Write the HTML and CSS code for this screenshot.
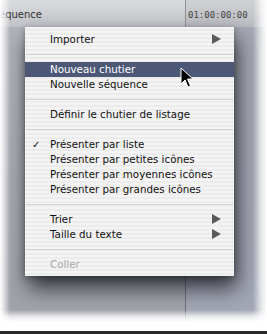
FILE: index.html
```html
<!DOCTYPE html>
<html lang="fr">
<head>
<meta charset="utf-8">
<link rel="stylesheet" href="styles.css">
</head>
<body>
<div class="frame">
  <div class="window">
    <div class="header">
      <div class="cell-name"><span class="clip">équence</span></div>
      <div class="cell-time">01:00:00:00</div>
    </div>
    <div class="body">
      <div class="col-left"></div>
      <div class="col-right"></div>
    </div>

    <div class="menu">
      <div class="item sub"><span>Importer</span><i class="arrow"></i></div>
      <div class="sep"></div>
      <div class="item hl"><span>Nouveau chutier</span></div>
      <div class="item"><span>Nouvelle séquence</span></div>
      <div class="sep"></div>
      <div class="item"><span>Définir le chutier de listage</span></div>
      <div class="sep"></div>
      <div class="item checked"><b class="check">✓</b><span>Présenter par liste</span></div>
      <div class="item"><span>Présenter par petites icônes</span></div>
      <div class="item"><span>Présenter par moyennes icônes</span></div>
      <div class="item"><span>Présenter par grandes icônes</span></div>
      <div class="sep"></div>
      <div class="item sub"><span>Trier</span><i class="arrow"></i></div>
      <div class="item sub"><span>Taille du texte</span><i class="arrow"></i></div>
      <div class="sep"></div>
      <div class="item disabled"><span>Coller</span></div>
    </div>

    <svg class="cursor" width="14" height="22" viewBox="0 0 14 22">
      <path d="M1 1 L1 17 L5 13 L8 20 L10.5 19 L7.5 12 L13 12 Z" fill="#000" stroke="#fff" stroke-width="1" stroke-linejoin="round"/>
    </svg>
  </div>
  <div class="bottom-line"></div>
</div>
</body>
</html>
```
FILE: styles.css
```css
html, body {
  margin: 0;
  padding: 0;
  background: #ffffff;
}
body {
  width: 267px;
  height: 334px;
  overflow: hidden;
  font-family: "DejaVu Sans", "Liberation Sans", sans-serif;
}
.frame {
  display: flex;
  flex-direction: column;
  width: 267px;
  height: 334px;
}
.window {
  position: relative;
  flex: 0 0 322px;
  display: flex;
  flex-direction: column;
  background: #a3a6af;
  overflow: hidden;
}
.window::before {
  content: "";
  position: absolute;
  left: 0; top: 0; bottom: 0;
  width: 10px;
  background: linear-gradient(to right, #ffffff 0%, rgba(255,255,255,0.65) 40%, rgba(255,255,255,0) 100%);
  z-index: 3;
}
.window::after {
  content: "";
  position: absolute;
  left: 0; right: 0; top: 0; bottom: 0;
  background:
    linear-gradient(to left, #ffffff 0px, rgba(255,255,255,0.7) 6px, rgba(255,255,255,0) 14px),
    linear-gradient(to top, #ffffff 0px, rgba(255,255,255,0.8) 5px, rgba(255,255,255,0) 12px);
  z-index: 3;
  pointer-events: none;
}
.header {
  flex: 0 0 27px;
  display: flex;
  background: linear-gradient(#dadbdd, #c2c4c9);
}
.cell-name {
  width: 185px;
  overflow: hidden;
  font-size: 10px;
  color: #333;
  padding-top: 9px;
  box-sizing: border-box;
}
.clip { display: block; margin-left: -1px; }
.cell-time {
  flex: 1;
  border-left: 1px solid #8e9096;
  font-family: "DejaVu Sans Mono", monospace;
  font-size: 9px;
  color: #444;
  padding: 10px 0 0 2px;
  background: linear-gradient(#d0d1d4, #babcc2);
}
.body {
  flex: 1;
  display: flex;
}
.col-left {
  width: 185px;
  background: linear-gradient(#b2b4ba, #a0a3ab);
}
.col-right {
  flex: 1;
  border-left: 1px solid #6f727a;
  background: linear-gradient(#a6a9b5, #a4a8b5);
}
.bottom-line {
  flex: 0 0 auto;
  height: 3px;
  margin-top: 9px;
  background: #2a2a2a;
}

.menu {
  position: absolute;
  left: 25px;
  top: 27px;
  width: 209px;
  padding: 5px 0 4px;
  background: repeating-linear-gradient(#f4f4f4 0 2px, #ececec 2px 4px);
  box-shadow: 3px 12px 20px rgba(20,22,30,0.8), 0 2px 6px rgba(0,0,0,0.3);
  z-index: 2;
  font-size: 10.3px;
  color: #111;
}
.item {
  position: relative;
  height: 15px;
  line-height: 15px;
  padding-left: 25px;
  white-space: nowrap;
}
.item.hl {
  background: #4d5877;
  color: #ffffff;
}
.item.disabled { color: #a8a8a8; }
.check {
  position: absolute;
  left: 7px;
  top: 0;
  font-weight: normal;
  font-size: 10px;
}
.arrow {
  position: absolute;
  right: 13px;
  top: 2px;
  width: 0;
  height: 0;
  border-top: 5px solid transparent;
  border-bottom: 5px solid transparent;
  border-left: 9px solid #5a5a5a;
}
.sep {
  height: 15px;
  position: relative;
}
.sep::after {
  content: "";
  position: absolute;
  left: 1px; right: 1px; top: 7px;
  height: 1px;
  background: #d2d2d2;
}
.cursor {
  position: absolute;
  left: 180px;
  top: 67px;
  z-index: 4;
}
```
